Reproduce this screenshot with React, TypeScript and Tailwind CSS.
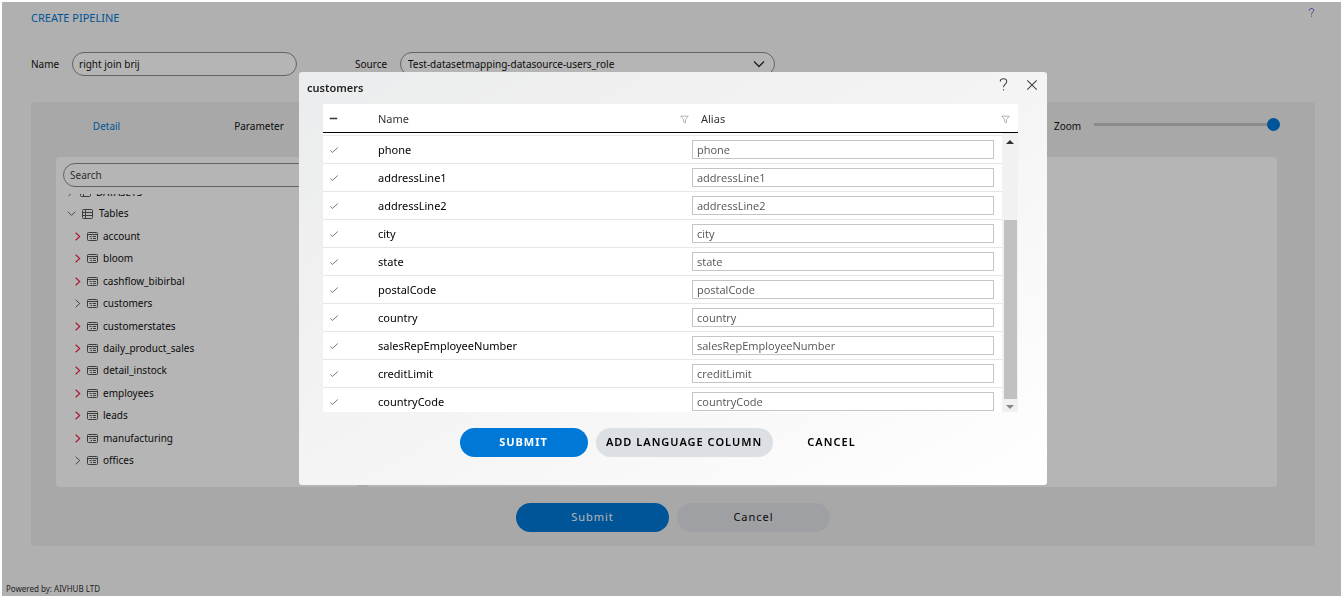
import { useState } from "react";
import type { ReactNode } from "react";

type Column = {
    name: string;
    alias: string;
};

const initialColumns: Column[] = [
    "phone",
    "addressLine1",
    "addressLine2",
    "city",
    "state",
    "postalCode",
    "country",
    "salesRepEmployeeNumber",
    "creditLimit",
    "countryCode",
].map((name) => ({ name, alias: name }));

const tables = [
    { name: "account", flagged: true },
    { name: "bloom", flagged: true },
    { name: "cashflow_bibirbal", flagged: true },
    { name: "customers", flagged: false },
    { name: "customerstates", flagged: true },
    { name: "daily_product_sales", flagged: true },
    { name: "detail_instock", flagged: true },
    { name: "employees", flagged: true },
    { name: "leads", flagged: true },
    { name: "manufacturing", flagged: true },
    { name: "offices", flagged: false },
];

const Icon = ({ children, className, box = 12 }: { children: ReactNode; className: string; box?: number }) => (
    <svg viewBox={`0 0 ${box} ${box}`} className={className} fill="none" stroke="currentColor" aria-hidden="true">
        {children}
    </svg>
);

const HelpIcon = ({ className }: { className: string }) => (
    <Icon className={className}>
        <path d="M3 3.4C3 1.8 4.2.7 5.9.7S9 1.8 9 3.3C9 5.5 6 5.8 6 8.6" />
        <path d="M6 10.3v1.2" />
    </Icon>
);

const FunnelIcon = () => (
    <Icon className="size-[9px] shrink-0 text-[#999]">
        <path d="M1 1.5h10L7.3 6v4.5L4.7 9V6z" />
    </Icon>
);

const TableIcon = () => (
    <Icon className="size-[11px] shrink-0 text-[#555]" box={11}>
        <rect x=".5" y="1.5" width="10" height="8" rx="1" />
        <path d="M.5 3.5h10M2.5 5.5h2M5.500 5.500H9M3.500 7.500h1.500M6 7.500h3" />
    </Icon>
);

const GridIcon = () => (
    <Icon className="size-[11px] shrink-0 text-[#555]" box={11}>
        <rect x=".5" y="1.5" width="10" height="9" rx="1" />
        <path d="M.5 4.5h10M.5 7.5h10M3.5 1.5v9" />
    </Icon>
);

const SourceTree = () => (
    <div className="flex w-[303px] flex-col rounded bg-white px-[7px] pt-[6px]">
        <input
            type="search"
            aria-label="Search"
            placeholder="Search"
            className="h-6 w-full shrink-0 rounded-full border border-[#8c8c8c] px-[6px] text-[10px] placeholder:text-[#444]"
        />
        {/* The list is scrolled, so only the foot of its first node shows */}
        <div className="mt-1 flex h-[10px] flex-col justify-end overflow-hidden pb-1">
            <div className="flex h-[3px] items-end gap-[5px] overflow-hidden pl-[3px] text-[10px] leading-[10px]">
                <Icon className="size-[9px] shrink-0 text-[#333]">
                    <path d="M3.5 1.5 8.5 6l-5 4.5" />
                </Icon>
                <GridIcon />
                <span>DATASETS</span>
            </div>
        </div>
        <div className="flex h-6 items-center gap-[6px] pl-1 text-[10px]">
            <Icon className="size-[9px] text-[#333]">
                <path d="M1 3.5 6 8.5l5-5" />
            </Icon>
            <GridIcon />
            <span>Tables</span>
        </div>
        <ul className="grid h-[247px] auto-rows-fr pl-[10px] text-[10px]">
            {tables.map((table) => (
                <li key={table.name} className="flex items-center gap-[5px]">
                    <Icon className={table.flagged ? "size-[9px] stroke-[1.4] text-[#f0143c]" : "size-[9px] text-[#333]"}>
                        <path d="M3.5 1 9 6l-5.5 5" />
                    </Icon>
                    <TableIcon />
                    <span>{table.name}</span>
                </li>
            ))}
        </ul>
    </div>
);

const PipelinePage = () => {
    const [name, setName] = useState("right join brij");
    const [zoom, setZoom] = useState(100);

    return (
        <main className="flex grow flex-col bg-[#f8f8f8] text-[10px] text-[#111]">
            <header className="flex h-8 items-center justify-between pr-[25px] pl-[29px]">
                <h1 className="text-[11px] text-[#0078d7]">CREATE PIPELINE</h1>
                <a href="#help" aria-label="Help" className="mb-3">
                    <HelpIcon className="size-[9px] text-[#3b1fd0]" />
                </a>
            </header>
            <div className="flex items-center pt-[18px] pl-[29px]">
                <label htmlFor="pipeline-name" className="w-[41px]">Name</label>
                <input
                    id="pipeline-name"
                    value={name}
                    onChange={(e) => setName(e.target.value)}
                    className="h-6 w-[225px] rounded-full border border-[#8c8c8c] bg-white px-[6px]"
                />
                <label htmlFor="pipeline-source" className="ml-[58px] w-[45px]">Source</label>
                <div className="grid w-[375px] items-center">
                    <select
                        id="pipeline-source"
                        className="col-start-1 row-start-1 h-6 w-full appearance-none rounded-full border border-[#8c8c8c] bg-white px-[7px]"
                    >
                        <option>Test-datasetmapping-datasource-users_role</option>
                    </select>
                    <Icon className="pointer-events-none col-start-1 row-start-1 mr-[10px] size-3 justify-self-end text-[#333]">
                        <path d="M1 3.5 6 8.5l5-5" strokeWidth="1.4" />
                    </Icon>
                </div>
            </div>
            <section className="mt-[26px] mr-[26px] ml-[29px] rounded bg-[#ededed]">
                <div className="flex h-[55px] items-center pr-[35px] pb-[6px] pl-[25px]">
                    <nav className="flex">
                        <a href="#detail" className="w-[101px] text-center text-[#0078d7]">Detail</a>
                        <a href="#parameter" className="ml-[50px] w-[104px] text-center">Parameter</a>
                    </nav>
                    <label htmlFor="zoom" className="ml-auto w-10">Zoom</label>
                    <input
                        id="zoom"
                        type="range"
                        value={zoom}
                        onChange={(e) => setZoom(Number(e.target.value))}
                        className="mb-1 h-[13px] w-[186px] appearance-none bg-[linear-gradient(#c4c4c4,#c4c4c4)] bg-[length:100%_3px] bg-center bg-no-repeat [&::-webkit-slider-thumb]:size-[13px] [&::-webkit-slider-thumb]:appearance-none [&::-webkit-slider-thumb]:rounded-full [&::-webkit-slider-thumb]:bg-[#0078d7]"
                    />
                </div>
                <div className="flex h-[330px] gap-2 pr-[38px] pl-[25px]">
                    <SourceTree />
                    <div className="grow rounded bg-white" />
                </div>
                <div className="flex h-[59px] items-start justify-center gap-2 pt-4 text-[11px] tracking-[1px]">
                    <button type="submit" className="h-[29px] w-[153px] rounded-full bg-[#0078d7] text-white">Submit</button>
                    <button type="button" className="h-[29px] w-[153px] rounded-full bg-[#e1e2e6]">Cancel</button>
                </div>
            </section>
            <footer className="mt-auto px-1 pb-px text-[8px] text-[#333]">Powered by: AIVHUB LTD</footer>
        </main>
    );
};

const ColumnsDialog = () => {
    const [columns, setColumns] = useState(initialColumns);

    const setAlias = (index: number, alias: string) => {
        setColumns(columns.map((column, i) => (i === index ? { ...column, alias } : column)));
    };

    return (
        <div
            role="dialog"
            aria-labelledby="dialog-title"
            className="h-fit w-[748px] rounded-[3px] bg-linear-to-br from-[#ebeced] via-[#f4f4f4] to-white pb-7"
        >
            <div className="flex h-8 items-center pr-2 pl-2">
                <h2 id="dialog-title" className="grow text-[11px] font-semibold text-[#222]">customers</h2>
                <button type="button" aria-label="Help" className="mr-[15px] mb-2">
                    <HelpIcon className="size-[13px] text-[#444]" />
                </button>
                <button type="button" aria-label="Close" className="mb-[6px]">
                    <Icon className="size-[14px] text-[#444]">
                        <path d="m2 2 8 8M10 2l-8 8" />
                    </Icon>
                </button>
            </div>
            <div className="mr-[29px] ml-6 bg-white">
                <table className="w-full table-fixed border-separate border-spacing-0 text-left text-[11px] text-[#333]">
                    <thead>
                        <tr className="h-[29px]">
                            <th className="w-[55px] border-b border-black pl-[6px]">
                                <Icon className="size-[9px]">
                                    <path d="M1 6h10" strokeWidth="2" />
                                </Icon>
                            </th>
                            <th className="w-[323px] border-b border-black font-normal">
                                <div className="flex items-center justify-between pt-0.5 pr-3">
                                    Name
                                    <FunnelIcon />
                                </div>
                            </th>
                            <th className="border-b border-black font-normal">
                                <div className="flex items-center justify-between pt-0.5 pr-2">
                                    Alias
                                    <FunnelIcon />
                                </div>
                            </th>
                        </tr>
                    </thead>
                </table>
                <div className="flex h-[279px] overflow-hidden">
                    <div className="grow pt-0.5">
                        <table className="w-full table-fixed border-separate border-spacing-0 text-[11px] text-black">
                            <tbody>
                                {columns.map((column, index) => (
                                    <tr key={column.name} className="h-7">
                                        <td className="w-[55px] border-t border-[#e4e7e7] pl-[6px]">
                                            <Icon className="size-[10px] text-[#777]">
                                                <path d="m1.5 6.5 2.5 2.5 6.5-6" strokeWidth="1.2" />
                                            </Icon>
                                        </td>
                                        <td className="w-[314px] border-t border-[#e4e7e7] pt-0.5">{column.name}</td>
                                        <td className="border-t border-[#e4e7e7] pr-2">
                                            <input
                                                aria-label={`Alias for ${column.name}`}
                                                value={column.alias}
                                                onChange={(e) => setAlias(index, e.target.value)}
                                                className="block h-[19px] w-full border border-[#c3c6c9] bg-white px-1 font-['Open_Sans',sans-serif] text-[#555]"
                                            />
                                        </td>
                                    </tr>
                                ))}
                            </tbody>
                        </table>
                    </div>
                    <div className="flex w-4 shrink-0 flex-col items-center bg-[#f1f1f1] pt-[5px] pb-px">
                        <Icon className="size-2 text-[#333]">
                            <path d="M0 9 6 3l6 6z" fill="currentColor" stroke="none" />
                        </Icon>
                        <div className="mt-[74px] mb-1 w-[13px] grow bg-[#c1c1c1]" />
                        <Icon className="size-2 text-[#888]">
                            <path d="m0 3 6 6 6-6z" fill="currentColor" stroke="none" />
                        </Icon>
                    </div>
                </div>
            </div>
            <div className="flex justify-center gap-2 pt-4 pr-1 text-[11px] font-bold tracking-[1px]">
                <button type="submit" className="h-[29px] w-32 rounded-full bg-[#0078d7] text-white">SUBMIT</button>
                <button type="button" className="h-[29px] w-[177px] rounded-full bg-[#dcdfe3] font-semibold">ADD LANGUAGE COLUMN</button>
                <button type="button" className="h-[29px] w-[102px] rounded-full font-semibold">CANCEL</button>
            </div>
        </div>
    );
};

const App = () => (
    <div className="flex min-h-screen flex-col bg-white p-0.5 font-['Noto_Sans','Open_Sans',sans-serif]">
        <PipelinePage />
        <div className="fixed inset-0.5 flex justify-center bg-[#0000004a] pt-[70px] pl-[3px]">
            <ColumnsDialog />
        </div>
    </div>
);

export default App;
